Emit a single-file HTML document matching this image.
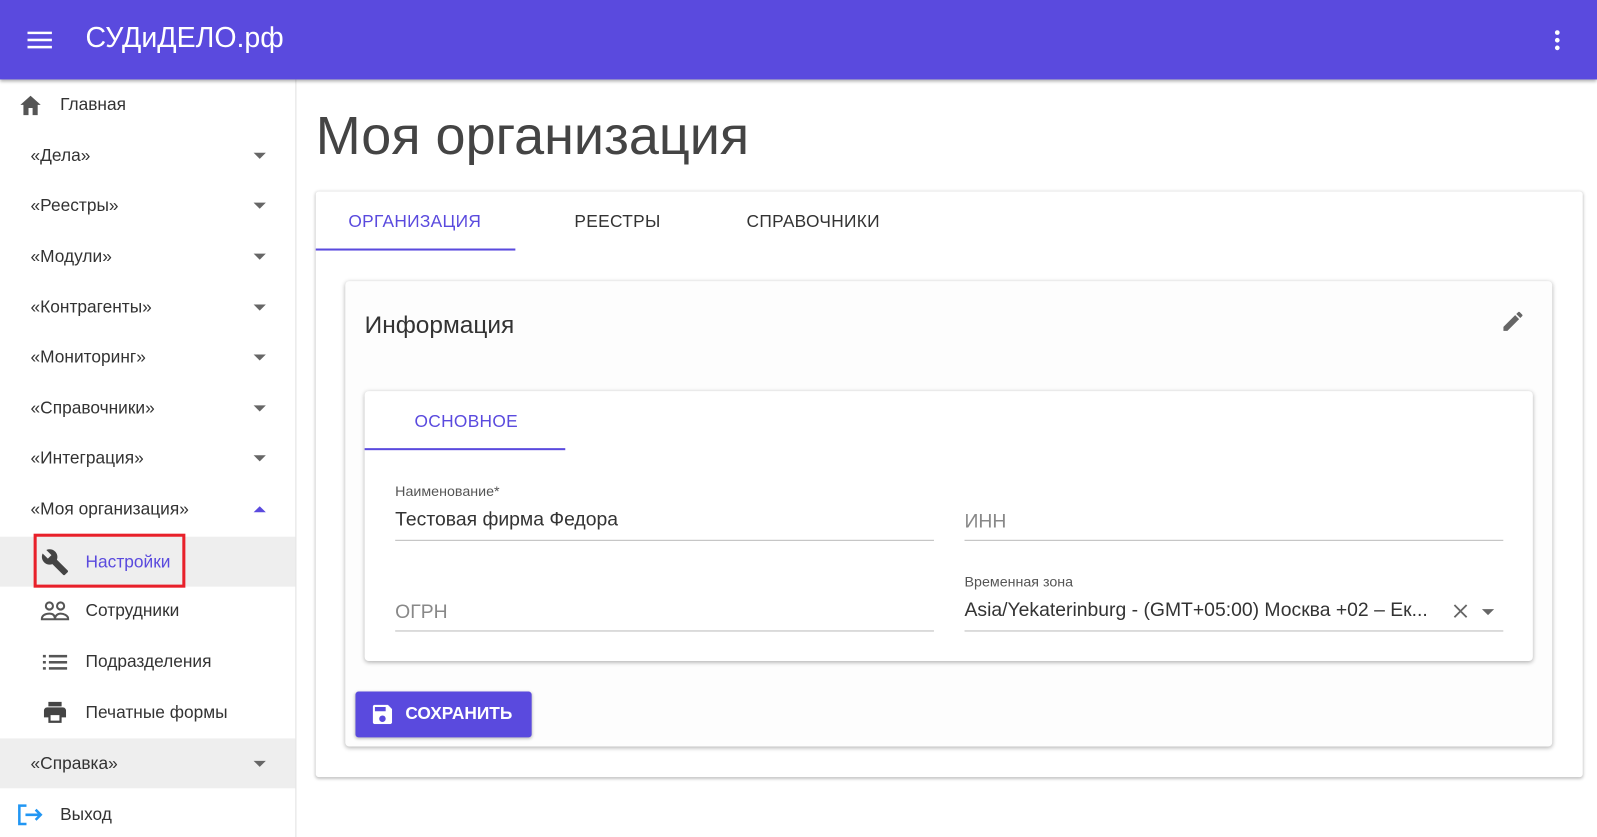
<!DOCTYPE html>
<html><head><meta charset="utf-8"><style>
*{box-sizing:border-box;margin:0;padding:0}
html,body{width:1597px;height:837px;overflow:hidden;background:#fff}
#w{width:1568px;height:822px;position:relative;transform:scale(1.0185);transform-origin:0 0;font-family:"Liberation Sans",Roboto,sans-serif;color:#333}
.top{position:absolute;left:0;top:0;width:1568px;height:78px;background:#5a4ade;box-shadow:0 2px 3px rgba(0,0,0,.3);z-index:2}
.top .t{position:absolute;left:84px;top:21px;color:#fff;font-size:28px}
.side{position:absolute;left:0;top:78px;width:291px;height:760px;border-right:1px solid #e0e0e0;background:#fff}
.it{position:absolute;left:0;width:290px;height:49px;font-size:17px;color:#333;display:flex;align-items:center}
.it .tx{position:absolute;left:30px}
.arr{position:absolute;left:249px;top:22px;width:0;height:0;border-left:6px solid transparent;border-right:6px solid transparent;border-top:6px solid #666}
.up{border-top:none;border-bottom:6px solid #5a4ade}
.sub .tx{left:84px}
.ic{position:absolute;left:40px}
h1{position:absolute;left:310px;top:103px;font-weight:normal;font-size:53px;color:#444}
.c1{position:absolute;left:310px;top:188px;width:1244px;height:575px;background:#fff;box-shadow:0 1px 3px rgba(0,0,0,.3);border-radius:3px}
.tab{position:absolute;top:208px;font-size:17px;color:#333;letter-spacing:.3px}
.c2{position:absolute;left:339px;top:276px;width:1185px;height:457px;background:#fdfdfd;box-shadow:0 1px 4px rgba(0,0,0,.3);border-radius:4px}
.c3{position:absolute;left:358px;top:384px;width:1147px;height:265px;background:#fff;box-shadow:0 1px 4px rgba(0,0,0,.3);border-radius:4px}
.lbl{position:absolute;font-size:14px;color:#555}
.val{position:absolute;font-size:19px;color:#333}
.ph{position:absolute;font-size:19px;color:#888}
.ln{position:absolute;height:1px;background:#bbb;width:529px}
</style></head><body><div id="w">
<div class="top">
<svg style="position:absolute;left:27px;top:31px" width="24" height="17"><rect y="0" width="24" height="2.5" fill="#fff"/><rect y="7" width="24" height="2.5" fill="#fff"/><rect y="14" width="24" height="2.5" fill="#fff"/></svg>
<div class="t">СУДиДЕЛО.рф</div>
<svg style="position:absolute;left:1524px;top:29px" width="10" height="22"><circle cx="5" cy="3" r="2.3" fill="#fff"/><circle cx="5" cy="10.5" r="2.3" fill="#fff"/><circle cx="5" cy="18" r="2.3" fill="#fff"/></svg>
</div>
<div class="side">
<div class="it" style="top:0"><svg class="ic" style="left:18px" width="24" height="22" viewBox="0 0 24 22"><path d="M10 21v-7h4v7h5v-10h3L12 2 2 11h3v10z" fill="#555"/></svg><span class="tx" style="left:59px">Главная</span></div>
<div class="it" style="top:50px"><span class="tx">«Дела»</span><i class="arr"></i></div>
<div class="it" style="top:99px"><span class="tx">«Реестры»</span><i class="arr"></i></div>
<div class="it" style="top:149px"><span class="tx">«Модули»</span><i class="arr"></i></div>
<div class="it" style="top:199px"><span class="tx">«Контрагенты»</span><i class="arr"></i></div>
<div class="it" style="top:248px"><span class="tx">«Мониторинг»</span><i class="arr"></i></div>
<div class="it" style="top:298px"><span class="tx">«Справочники»</span><i class="arr"></i></div>
<div class="it" style="top:347px"><span class="tx">«Интеграция»</span><i class="arr"></i></div>
<div class="it" style="top:397px"><span class="tx">«Моя организация»</span><i class="arr up"></i></div>
<div class="it sub" style="top:449px;background:#eee"><svg class="ic" style="left:40px" width="28" height="28" viewBox="0 0 24 24"><path d="M22.7 19l-9.1-9.1c.9-2.3.4-5-1.5-6.9-2-2-5-2.4-7.4-1.3L9 6 6 9 1.6 4.7C.4 7.1.9 10.1 2.900 12.1c1.900 1.900 4.600 2.400 6.900 1.500l9.100 9.100c.4.4 1 .4 1.400 0l2.300-2.300c.5-.4.5-1.100.1-1.400z" fill="#444"/></svg><span class="tx" style="color:#5a4ade">Настройки</span>
<div style="position:absolute;left:33px;top:-3px;width:149px;height:53px;border:3px solid #e8202a"></div></div>
<div class="it sub" style="top:497px"><svg class="ic" width="28" height="20" viewBox="0 0 28 20"><circle cx="8.5" cy="5" r="3.5" fill="none" stroke="#555" stroke-width="2"/><circle cx="19.5" cy="5" r="3.5" fill="none" stroke="#555" stroke-width="2"/><path d="M1 18c0-4 4-5.500 7.500-5.500S14 14 14 18zM14 18c0-4 3-5.500 5.500-5.500S27 14 27 18z" fill="none" stroke="#555" stroke-width="2"/></svg><span class="tx">Сотрудники</span></div>
<div class="it sub" style="top:547px"><svg class="ic" style="left:42px" width="24" height="16"><g fill="#555"><rect x="0" y="1" width="3" height="2.5"/><rect x="6" y="1" width="18" height="2.5"/><rect x="0" y="7" width="3" height="2.5"/><rect x="6" y="7" width="18" height="2.5"/><rect x="0" y="13" width="3" height="2.5"/><rect x="6" y="13" width="18" height="2.5"/></g></svg><span class="tx">Подразделения</span></div>
<div class="it sub" style="top:597px"><svg class="ic" style="left:41px" width="26" height="24" viewBox="0 0 24 22"><path d="M19 6H5c-1.700 0-3 1.300-3 3v6h4v5h12v-5h4V9c0-1.700-1.300-3-3-3zm-3 12H8v-5h8zM18 1H6v4h12z" fill="#444"/></svg><span class="tx">Печатные формы</span></div>
<div class="it" style="top:647px;background:#eee"><span class="tx">«Справка»</span><i class="arr"></i></div>
<div class="it" style="top:697px"><svg class="ic" style="left:17px" width="26" height="22" viewBox="0 0 26 22"><path d="M9 2H2v18h7" fill="none" stroke="#2196f3" stroke-width="2.5"/><path d="M8 11h15M18 6l5 5-5 5" fill="none" stroke="#2196f3" stroke-width="2.5"/></svg><span class="tx" style="left:59px">Выход</span></div>
</div>
<h1>Моя организация</h1>
<div class="c1"></div>
<div class="tab" style="left:342px;color:#5a4ade">ОРГАНИЗАЦИЯ</div>
<div style="position:absolute;left:310px;top:244px;width:196px;height:2px;background:#5a4ade"></div>
<div class="tab" style="left:564px">РЕЕСТРЫ</div>
<div class="tab" style="left:733px">СПРАВОЧНИКИ</div>
<div class="c2"></div>
<div style="position:absolute;left:358px;top:306px;font-size:24px;color:#333">Информация</div>
<svg style="position:absolute;left:1473px;top:303px" width="25" height="25" viewBox="0 0 24 24"><path d="M3 17.250V21h3.750L17.800 9.940l-3.750-3.750zM20.700 7.040a1 1 0 000-1.410l-2.340-2.340a1 1 0 00-1.410 0l-1.830 1.830 3.750 3.750z" fill="#666"/></svg>
<div class="c3"></div>
<div class="tab" style="left:407px;top:404px;color:#5a4ade">ОСНОВНОЕ</div>
<div style="position:absolute;left:358px;top:440px;width:197px;height:2px;background:#5a4ade"></div>
<div class="lbl" style="left:388px;top:474px">Наименование*</div>
<div class="val" style="left:388px;top:500px">Тестовая фирма Федора</div>
<div class="ln" style="left:388px;top:530px"></div>
<div class="ph" style="left:947px;top:502px">ИНН</div>
<div class="ln" style="left:947px;top:530px"></div>
<div class="ph" style="left:388px;top:591px">ОГРН</div>
<div class="ln" style="left:388px;top:619px"></div>
<div class="lbl" style="left:947px;top:563px">Временная зона</div>
<div class="val" style="left:947px;top:589px">Asia/Yekaterinburg - (GMT+05:00) Москва +02 – Ек...</div>
<svg style="position:absolute;left:1427px;top:593px" width="14" height="14"><path d="M1 1l12 12M13 1L1 13" stroke="#666" stroke-width="1.8"/></svg>
<div style="position:absolute;left:1455px;top:598px;border-left:6px solid transparent;border-right:6px solid transparent;border-top:6px solid #666"></div>
<div class="ln" style="left:947px;top:619px"></div>
<div style="position:absolute;left:349px;top:679px;width:173px;height:45px;background:#5a4ade;border-radius:3px;box-shadow:0 1px 3px rgba(0,0,0,.3)">
<svg style="position:absolute;left:17px;top:13px" width="19" height="19" viewBox="0 0 18 18"><path d="M14 0H2C.9 0 0 .9 0 2v14c0 1.100.9 2 2 2h14c1.100 0 2-.9 2-2V4zM9 16c-1.700 0-3-1.300-3-3s1.300-3 3-3 3 1.300 3 3-1.300 3-3 3zm3-10H2V2h10z" fill="#fff"/></svg>
<span style="position:absolute;left:49px;top:12px;color:#fff;font-size:17px;font-weight:bold">СОХРАНИТЬ</span></div>
</div></body></html>
